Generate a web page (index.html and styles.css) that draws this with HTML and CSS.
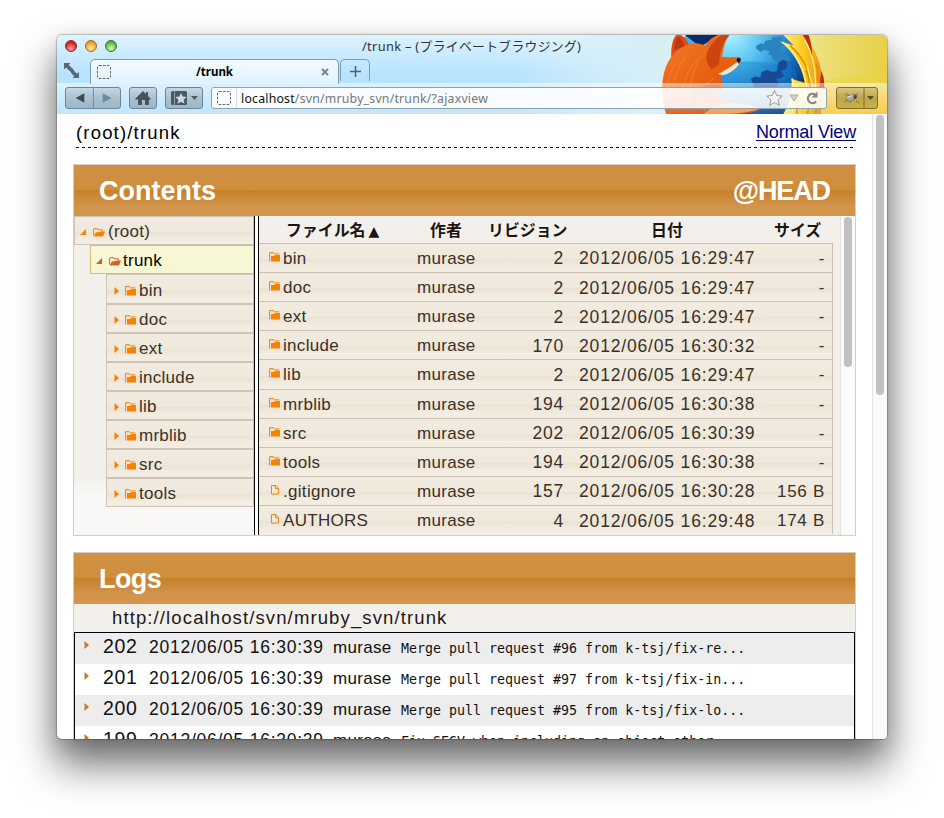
FILE: index.html
```html
<!DOCTYPE html>
<html lang="ja">
<head>
<meta charset="utf-8">
<title>/trunk</title>
<link rel="stylesheet" href="styles.css">
</head>
<body>
<svg width="0" height="0" class="defs">
  <symbol id="folder" viewBox="0 0 11 10"><path d="M.6 9.5V.6h3.8l1 1.3h5" fill="none" stroke="#f68204"/><path d="M1 1h3v1.6H1z" fill="#fbd3a4"/><path d="M2 4h3l1-1h5v6.6H2z" fill="#f68204"/></symbol>
  <symbol id="open" viewBox="0 0 12 9"><path d="M.6 7.5V1.1L1.2.6h3L5 1.8h4.4V3.5" fill="none" stroke="currentColor"/><path d="M3 4.2h3l1-.8h5L10 8.5H.7z" fill="currentColor"/></symbol>
  <symbol id="file" viewBox="0 0 8 10"><path d="M.5.6h4.6l2.3 2.5v6H.5zM4.4.6v3.1h3" fill="none" stroke="#f68204"/></symbol>
  <symbol id="dashed" viewBox="0 0 14 14"><rect x=".5" y=".5" width="13" height="13" rx="1.5" fill="none" stroke="#666" stroke-dasharray="2.6 1.4"/></symbol>
  <symbol id="right" viewBox="0 0 5 8"><path d="M.5 0L5 4 .5 8z" fill="currentColor"/></symbol>
  <symbol id="corner" viewBox="0 0 6 6"><path d="M6 0v6H0z" fill="currentColor"/></symbol>
</svg>
<div class="window">
  <header class="chrome">
    <svg class="persona" viewBox="0 0 830 79">
      <defs>
        <linearGradient id="sky" x2="0" y2="1"><stop offset="0" stop-color="#def3ff"/><stop offset=".5" stop-color="#b7e3ff"/><stop offset="1" stop-color="#bfe4fc"/></linearGradient>
        <linearGradient id="sun" x2="1" y2="0"><stop offset="0" stop-color="#e5f4f3" stop-opacity="0"/><stop offset=".35" stop-color="#d5eefa"/><stop offset=".66" stop-color="#eef1c0"/><stop offset=".85" stop-color="#ebdd70"/><stop offset="1" stop-color="#e9d049"/></linearGradient>
        <radialGradient id="globe" cx=".43" cy=".16" r=".65"><stop offset="0" stop-color="#b0f5ff"/><stop offset=".38" stop-color="#52bfef"/><stop offset=".7" stop-color="#1575c3"/><stop offset="1" stop-color="#092b72"/></radialGradient>
        <linearGradient id="fur" x2="1" y2="1"><stop offset="0" stop-color="#f17b2a"/><stop offset=".5" stop-color="#e9600f"/><stop offset="1" stop-color="#d4480a"/></linearGradient>
        <linearGradient id="flame"><stop offset="0" stop-color="#fff37a"/><stop offset=".55" stop-color="#fdc91f"/><stop offset="1" stop-color="#ed8b17"/></linearGradient>
        <linearGradient id="veil" x2="0" y2="1"><stop offset="0" stop-color="#fff" stop-opacity=".5"/><stop offset="1" stop-color="#fff" stop-opacity=".04"/></linearGradient>
      </defs>
      <rect width="830" height="79" fill="url(#sky)"/>
      <rect x="460" width="370" height="79" fill="url(#sun)"/>
      <path d="M740 50Q790 40 830 38V79H740z" fill="#ecd23c" opacity=".45"/>
      <path d="M760 50Q800 50 830 58V79H760z" fill="#ffc442" opacity=".6"/>
      <g transform="translate(593 -5) scale(.33333)">
        <circle cx="270" cy="155" r="213" fill="url(#globe)"/>
        <path d="M105 15l105 0-60 35z" fill="#0a2a6c"/>
        <path d="M195 110Q310 75 440 120Q440 200 400 252H220z" fill="#147bcb" opacity=".4"/>
        <path d="M318 48l14-8 10 2 4-10 18-2 4-8h26l6 22-10 16 10 12 16 4 6 14-14 4-14-6-12 8-14-8-4-12-12-4 8-9-18-3-8 6-14-8z" fill="#2a82bf"/>
        <path d="M303 148l10-8 18 2 4-16 16-6 16 6 14-2 4-26 12-8 12 2 4 12-4 12-16 8 9 12-8 8-16 4 10 12-14 18-18-8-12 12-18-12-12 6z" fill="#164a92"/>
        <path d="M390 34Q450 80 464 158L424 146Q430 200 400 252H512Q525 195 516 130Q503 60 460 15H400L430 46z" fill="url(#flame)"/>
        <path d="M458 15Q480 45 486 82Q488 50 476 15zM514 122Q527 150 521 178L508 170z" fill="#ba2d12"/>
        <path d="M420 46Q475 95 485 170M432 160Q448 200 440 252M468 120Q492 180 472 252M500 100Q512 180 496 252" fill="none" stroke="#e38b10" stroke-width="5"/>
        <path d="M397 36Q456 85 470 168L460 215L426 146Q442 205 425 252M464 30Q505 100 494 195L471 107" fill="none" stroke="#fff188" stroke-width="4"/>
        <path d="M64 84Q61 38 78 15H92Q110 24 118 48L86 80z" fill="#e34b12"/>
        <path d="M73 60Q72 30 85 18Q99 32 105 48z" fill="#b83a10"/>
        <path d="M48 252Q28 185 42 128Q60 60 120 42Q146 35 166 47Q177 25 204 15H238Q222 34 216 82L264 82Q276 88 268 98L251 114L216 136Q214 157 222 168Q190 190 215 210Q263 225 330 235Q326 252 240 252z" fill="url(#fur)"/>
        <path d="M168 84Q174 39 216 15H238Q208 48 207 104L186 118Q170 105 168 84z" fill="#cd440e"/>
        <path d="M204 132Q226 122 262 96L267 103Q250 128 218 136z" fill="#ffe6cc"/>
        <path d="M262 83h9l2 7-6 10-8-8z" fill="#171e2d"/>
        <path d="M159 75Q106 110 91 210M113 70Q59 140 68 228M145 92Q118 145 117 215M190 145Q150 170 164 245M78 97Q44 150 55 225" fill="none" stroke="#f99045" stroke-width="4" opacity=".4"/>
        <path d="M135 180Q165 157 216 166Q188 185 196 205Q150 182 122 218z" fill="#9d2a15" opacity=".5"/>
        <path d="M190 230Q240 205 330 235Q300 249 240 252H160z" fill="#f79a42"/>
      </g>
      <rect y="48" width="830" height="31" fill="url(#veil)"/>
    </svg>
    <div class="titlebar">
      <i class="light red"></i><i class="light amber"></i><i class="light green"></i>
      <span class="wtitle">/trunk – (プライベートブラウジング)</span>
    </div>
    <div class="tabs">
      <svg class="expand" viewBox="0 0 15 15"><path d="M0 0h6.5L4.7 1.8 7.4 4.5l1.8 1.8 1.2 1.9 2.7 2.6L15 9v6H8.5l1.8-1.8L7.6 10.5 6 8 4.5 7 2 4.4 0 6.4z" fill="#5a6972"/></svg>
      <div class="tab"><svg class="fav"><use href="#dashed"/></svg><b>/trunk</b><svg class="close" viewBox="0 0 8 8"><path d="M1 1l6 6M7 1L1 7" stroke="#7d8488" stroke-width="2"/></svg></div>
      <div class="plus"><svg viewBox="0 0 11 11"><path d="M5.5 0v11M0 5.5h11" stroke="#4c626f" stroke-width="1.5"/></svg></div>
    </div>
    <nav class="bar">
      <div class="btn pair"><svg viewBox="0 0 56 20"><path d="M28.5 0v20" stroke="#708998"/><path d="M10 10l9-5v10z" fill="#3c4d58"/><path d="M47 10l-9-5v10z" fill="#718a99"/></svg></div>
      <div class="btn home"><svg viewBox="0 0 26 20"><path d="M5 11l8-8 3 3V4h2v4l3 3-1 1-1-1v6h-4v-5h-3v5H8v-6l-2 1z" fill="#46545e"/></svg></div>
      <div class="btn marks"><svg viewBox="0 0 36 20"><rect x="5" y="3" width="16" height="14" rx="1.5" fill="#4a5963"/><path d="M8.5 3v14" stroke="#8ca0ad"/><path d="M15 5l1.6 3.6 4 .4-3 2.7.9 4-3.5-2-3.5 2 .9-4-3-2.7 4-.4z" fill="#ccdae3"/><path d="M25 8h7l-3.5 4z" fill="#4a5b66"/></svg></div>
      <div class="url"><span class="ident"><svg class="fav"><use href="#dashed"/></svg></span><span class="address"><b>localhost</b>/svn/mruby_svn/trunk/?ajaxview</span>
        <svg class="tools" viewBox="0 0 54 18"><path d="M8.5 1.5l2.3 5 5.4.6-4 3.7 1.1 5.5-4.8-2.8-4.8 2.8L4.8 10.8l-4-3.7 5.4-.6z" fill="#f5f4f3" stroke="#999"/><path d="M24 6h8l-4 6z" fill="#d8d2ca" stroke="#aaa69f"/><path d="M50 12.5a4.6 4.6 0 1 1-.5-6.5" fill="none" stroke="#858585" stroke-width="2.2"/><path d="M51.5 2.5v6h-6z" fill="#858585"/></svg>
      </div>
      <div class="btn bug"><svg viewBox="0 0 40 20"><path d="M27 0v20" stroke="#7e6d2c"/><path d="M7 6l5 3M7 14l6-4M13 15l2-5M19 13l3 2M17 8l4-3M10 5l3 4" stroke="#65613f" stroke-width=".7"/><ellipse cx="14.5" cy="9.8" rx="5.5" ry="2.8" transform="rotate(-20 14.5 9.8)" fill="#a9a8a0" stroke="#68665e" stroke-width=".6"/><path d="M10 9.5l5-2" stroke="#eee"/><path d="M17 7l3 .5-1 3-2.5.5z" fill="#45443e"/><path d="M30 8h7l-3.5 4z" fill="#57501f"/></svg></div>
    </nav>
  </header>
  <main class="view">
    <div class="page">
      <div class="crumb"><span>(root)/trunk</span><a>Normal View</a></div>
      <section class="panel contents">
        <h2><span>Contents</span><span class="rev">@HEAD</span></h2>
        <div class="split">
          <div class="tree" id="tree">
            <div class="node root"><svg class="cor"><use href="#corner"/></svg><svg class="op"><use href="#open"/></svg>(root)</div>
            <div class="node sel"><svg class="cor"><use href="#corner"/></svg><svg class="op"><use href="#open"/></svg>trunk</div>
          </div>
          <div class="divider"></div>
          <div class="list" id="list">
            <div class="row head"><span class="h1">ファイル名<small>▲</small></span><span class="h2">作者</span><span class="h3">リビジョン</span><span class="h4">日付</span><span class="h5">サイズ</span></div>
          </div>
          <div class="track"><i></i></div>
        </div>
      </section>
      <section class="panel logs">
        <h2><span class="lt">Logs</span></h2>
        <div class="repo">http://localhost/svn/mruby_svn/trunk</div>
        <div class="log" id="log"></div>
      </section>
    </div>
    <div class="track outer"><i></i></div>
  </main>
</div>
<script src="script.js"></script>
</body>
</html>
```
FILE: styles.css
```css
* { box-sizing: border-box; }
body { margin: 0; padding: 35px 0 0 57px; width: 944px; height: 818px; overflow: hidden; background: #fff; font: 17px "Liberation Sans", "Noto Sans CJK JP", sans-serif; color: #3a3128; }
svg { display: block; flex: none; }
.defs { position: absolute; }
.window { width: 830px; height: 704px; border-radius: 5px; background: #fff; box-shadow: 0 0 1px 1px rgba(0,0,0,.22), 0 24px 40px 2px rgba(0,0,0,.55), 0 8px 20px rgba(0,0,0,.12); }
.chrome { position: relative; height: 79px; border-radius: 5px 5px 0 0; overflow: hidden; font: 12px "Noto Sans", "Noto Sans CJK JP", sans-serif; }
.persona { position: absolute; left: 0; top: 0; width: 830px; height: 79px; }
.titlebar, .tabs, .bar { position: relative; display: flex; }
.titlebar { height: 24px; padding: 5px 0 0 8px; gap: 8px; }
.light { width: 12px; height: 12px; border-radius: 50%; border: 1px solid; }
.red { background: radial-gradient(circle at 50% 75%, #ffb0a8, #e22c2d 55%, #b81115); border-color: #92252a; }
.amber { background: radial-gradient(circle at 50% 75%, #fff2a0, #f5a62d 60%, #c9770c); border-color: #a06a25; }
.green { background: radial-gradient(circle at 50% 75%, #d5ffad, #62bd4b 60%, #378729); border-color: #42763d; }
.wtitle { margin-left: 237px; margin-top: -2px; line-height: 17px; font-size: 12.8px; letter-spacing: .33px; color: #333; white-space: nowrap; }
.tabs { height: 24px; }
.expand { width: 15px; height: 15px; margin: 4px 0 0 7px; }
.tab { margin-left: 11px; width: 249px; height: 25px; border: 1px solid #7d9cae; border-bottom: 0; border-radius: 5px 5px 0 0; background: linear-gradient(#f3faff, #dff3ff); display: flex; align-items: center; padding: 0 9px 1px 6px; justify-content: space-between; color: #000; }
.tab b { font-size: 11.5px; margin-right: 3px; }
.fav { width: 14px; height: 14px; }
.close { width: 8px; height: 8px; }
.plus { margin-left: 1px; width: 30px; height: 22px; border: 1px solid #7d9cae; border-bottom: 0; border-radius: 5px 5px 0 0; padding: 6px 9px; }
.plus svg { width: 11px; height: 11px; }
.bar { height: 31px; padding: 4px 0 0 8px; }
.btn { height: 22px; border: 1px solid #6f8593; border-radius: 3px; background: linear-gradient(#c5d7e2, #a9c1d0 50%, #9cb7c8); }
.btn svg { height: 20px; width: 100%; }
.pair { width: 56px; }
.home { width: 28px; margin-left: 8px; }
.marks { width: 38px; margin-left: 8px; }
.url { width: 616px; margin-left: 8px; height: 22px; border: 1px solid #8fa3af; border-radius: 3px; background: rgba(255,255,255,.86); display: flex; align-items: center; }
.ident { width: 25px; height: 20px; padding: 3px 0 0 5px; border-right: 1px solid #d4dde2; }
.address { margin-left: 4px; color: #777; font-size: 12.3px; letter-spacing: .21px; white-space: nowrap; }
.address b { font-weight: 400; color: #111; }
.tools { width: 54px; height: 18px; margin-left: auto; margin-right: 6px; }
.bug { width: 42px; margin-left: 9px; border-color: #7e6d2c; background: linear-gradient(#d5c57e, #bda74b 50%, #c8ae43); }
.view { display: flex; height: 625px; overflow: hidden; border-radius: 0 0 4px 4px; }
.page { width: 815px; padding: 0 17px 0 16px; }
.crumb { display: flex; justify-content: space-between; margin: 0 -1px 0 3px; height: 35px; line-height: 37px; color: #000; font-size: 18.5px; letter-spacing: 1.18px; background: repeating-linear-gradient(90deg, #000 0 3px, transparent 3px 6px) 0 33px / 100% 1px no-repeat; }
.crumb a { color: #000080; font-size: 18px; letter-spacing: -.15px; text-decoration: underline; text-underline-offset: 2px; }
.panel { width: 783px; border: 1px solid #dccbc0; }
.contents { margin-top: 15px; height: 372px; }
.logs { margin-top: 16px; height: 300px; }
h2 { margin: 0; height: 51px; padding: 0 25px; display: flex; justify-content: space-between; color: #fff; font-size: 27px; line-height: 52px; background: linear-gradient(#cf9144, #ce8e3f 49%, #c88029 50%, #d1954b 80%, #d1954b); }
.rev { letter-spacing: -1.1px; }
.lt { letter-spacing: -.6px; }
.split { display: flex; height: 319px; overflow: hidden; background: #f3f0ec; }
.tree { width: 180px; background: linear-gradient(#f3f0ec 82%, #f9f8f6 87%); padding-top: .2px; }
.node { height: 29.13px; border: 1px solid #cfc3b8; display: flex; align-items: center; background: linear-gradient(#f1ebe0, #efe9dd 54%, #ece2d3 55%, #f3ece1 82%); letter-spacing: .25px; margin-left: 32px; padding: 3px 0 0 7px; }
.node.root { margin-left: 0; padding-left: 5px; }
.node.sel { margin-left: 16px; padding-left: 5px; background: #f8f7d4; border-color: #d9bd70; color: #000; }
.cor { width: 6px; height: 6px; color: #f68204; margin-right: 7px; }
.op { width: 12px; height: 9px; color: #f68204; margin-right: 3px; }
.sel .cor, .sel .op { color: #cb632b; }
.sel .op { margin-right: 2px; }
.arr { width: 5px; height: 8px; color: #f68204; margin-right: 6px; }
.fo { width: 11px; height: 10px; margin-right: 3px; }
.divider { width: 5px; border: solid #000; border-width: 0 1px; background: #fff; }
.list { width: 574px; }
.row { height: 29.15px; display: flex; align-items: center; padding-top: 1px; border: 1px solid #cbbfb3; border-width: 1px 1px 0 0; background: linear-gradient(#f1ebe0, #efe9dd 54%, #ece2d3 55%, #f3ece1 82%); letter-spacing: .3px; }
.row.head { height: 26.8px; padding-top: 0; border: 0; background: #f3f0ec; color: #1a1510; font: bold 15.9px "Noto Sans CJK JP", sans-serif; letter-spacing: 0; white-space: nowrap; }
.head small { font: 14px "DejaVu Sans", sans-serif; margin-left: 3px; }
.h1 { width: 144px; padding-left: 27px; }
.h2 { width: 60px; padding-left: 27px; margin-right: 25px; }
.h3 { width: 79px; }
.h4 { width: 122px; padding-left: 84px; }
.h5 { padding-left: 85px; }
.ic { width: 24px; padding-left: 10px; margin-top: -3px; }
.fl { padding-left: 12px; }
.fl svg { width: 8px; height: 10px; }
.name { width: 134px; padding-top: 1px; }
.who { width: 72px; padding-top: 1px; }
.num { width: 75px; padding-top: 1px; text-align: right; font-size: 17.5px; letter-spacing: .8px; }
.date { width: 190px; padding: 1px 0 0 15px; font-size: 17.5px; letter-spacing: .83px; white-space: nowrap; }
.size { flex: 1; padding: 1px 7px 0 0; text-align: right; letter-spacing: .7px; white-space: nowrap; }
.track { width: 15px; margin-left: auto; background: #fafafa; border-left: 1px solid #e5e3e1; padding: 1px 3px; }
.track i { display: block; width: 8px; height: 150px; border-radius: 4px; background: #c1c1c1; }
.track.outer i { height: 280px; }
.repo { height: 28px; line-height: 28px; padding-left: 38px; background: #f3f0ec; color: #1b1917; font-size: 18.5px; letter-spacing: 1.12px; }
.log { border: 1px solid #000; color: #111; height: 300px; }
.entry { height: 31px; display: flex; align-items: center; white-space: nowrap; padding: 0 0 2px 9px; }
.entry:nth-child(odd) { background: #ededed; }
.entry .arr { color: #c57c24; margin: -6px 14px 0 0; }
.entry .n { font-size: 19.5px; width: 46px; letter-spacing: .7px; margin-top: -2px; }
.entry .d { width: 184px; font-size: 17.5px; letter-spacing: .75px; }
.entry .w { width: 68px; letter-spacing: .3px; }
.entry code { font: 13.3px "DejaVu Sans Mono", monospace; padding-top: 2px; }
```
FILE: script.js
```js
const folders = ['bin', 'doc', 'ext', 'include', 'lib', 'mrblib', 'src', 'tools'];
document.getElementById('tree').insertAdjacentHTML('beforeend', folders.map(f =>
  `<div class="node"><svg class="arr"><use href="#right"/></svg><svg class="fo"><use href="#folder"/></svg>${f}</div>`).join(''));

const files = [
  ['bin', 2, '16:29:47'], ['doc', 2, '16:29:47'], ['ext', 2, '16:29:47'],
  ['include', 170, '16:30:32'], ['lib', 2, '16:29:47'], ['mrblib', 194, '16:30:38'],
  ['src', 202, '16:30:39'], ['tools', 194, '16:30:38'],
  ['.gitignore', 157, '16:30:28', '156 B'], ['AUTHORS', 4, '16:29:48', '174 B']
];
document.getElementById('list').insertAdjacentHTML('beforeend', files.map(([name, rev, time, size]) =>
  `<div class="row"><span class="ic ${size ? 'fl' : ''}">${size ? '<svg><use href="#file"/></svg>' : '<svg class="fo"><use href="#folder"/></svg>'}</span><span class="name">${name}</span><span class="who">murase</span><span class="num">${rev}</span><span class="date">2012/06/05 ${time}</span><span class="size">${size || '-'}</span></div>`).join(''));

const logs = [
  [202, 'Merge pull request #96 from k-tsj/fix-re...'],
  [201, 'Merge pull request #97 from k-tsj/fix-in...'],
  [200, 'Merge pull request #95 from k-tsj/fix-lo...'],
  [199, 'Fix SEGV when including an object other...']
];
document.getElementById('log').innerHTML = logs.map(([n, msg]) =>
  `<div class="entry"><svg class="arr"><use href="#right"/></svg><span class="n">${n}</span><span class="d">2012/06/05 16:30:39</span><span class="w">murase</span><code>${msg}</code></div>`).join('');
```
